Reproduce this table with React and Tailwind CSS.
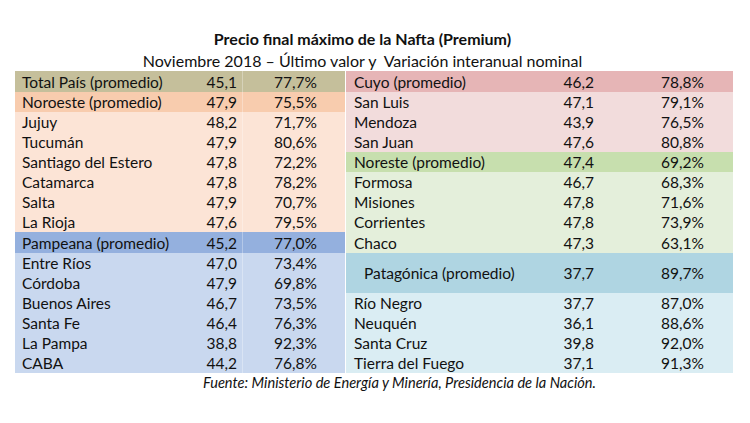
const font = { fontFamily: "Lato, 'Open Sans', sans-serif" }

const left = [
  { head: ["Total País (promedio)", "45,1", "77,7%"], headBg: "bg-[#c5bf9b]", headH: "h-[21px]", rowBg: "", rows: [] },
  {
    head: ["Noroeste (promedio)", "47,9", "75,5%"],
    headBg: "bg-[#f8ccae]",
    rowBg: "bg-[#fce4d6]",
    rows: [
      ["Jujuy", "48,2", "71,7%"],
      ["Tucumán", "47,9", "80,6%"],
      ["Santiago del Estero", "47,8", "72,2%"],
      ["Catamarca", "47,8", "78,2%"],
      ["Salta", "47,9", "70,7%"],
      ["La Rioja", "47,6", "79,5%"],
    ],
  },
  {
    head: ["Pampeana (promedio)", "45,2", "77,0%"],
    headBg: "bg-[#94b0de]",
    headH: "h-[21px]",
    rowBg: "bg-[#c9d8ef]",
    rows: [
      ["Entre Ríos", "47,0", "73,4%"],
      ["Córdoba", "47,9", "69,8%"],
      ["Buenos Aires", "46,7", "73,5%"],
      ["Santa Fe", "46,4", "76,3%"],
      ["La Pampa", "38,8", "92,3%"],
      ["CABA", "44,2", "76,8%"],
    ],
  },
]

const right = [
  {
    head: ["Cuyo (promedio)", "46,2", "78,8%"],
    headBg: "bg-[#e6b5b6]",
    headH: "h-[21px]",
    rowBg: "bg-[#f2dcdc]",
    rows: [
      ["San Luis", "47,1", "79,1%"],
      ["Mendoza", "43,9", "76,5%"],
      ["San Juan", "47,6", "80,8%"],
    ],
  },
  {
    head: ["Noreste (promedio)", "47,4", "69,2%"],
    headBg: "bg-[#c7dfae]",
    rowBg: "bg-[#e4efdb]",
    rows: [
      ["Formosa", "46,7", "68,3%"],
      ["Misiones", "47,8", "71,6%"],
      ["Corrientes", "47,8", "73,9%"],
      ["Chaco", "47,3", "63,1%", "h-[21px]"],
    ],
  },
  {
    head: ["Patagónica (promedio)", "37,7", "89,7%"],
    headBg: "bg-[#afd5e2]",
    headH: "h-10",
    indent: true,
    rowBg: "bg-[#daedf3]",
    rows: [
      ["Río Negro", "37,7", "87,0%"],
      ["Neuquén", "36,1", "88,6%"],
      ["Santa Cruz", "39,8", "92,0%"],
      ["Tierra del Fuego", "37,1", "91,3%"],
    ],
  },
]

const LeftRow = ({ cells, bg, h = "h-5" }) => (
  <div className={`grid grid-cols-[227px_103px] items-center ${h} ${bg}`}>
    <div className="flex justify-between pl-[7px] pr-[5px]">
      <span>{cells[0]}</span>
      <span>{cells[1]}</span>
    </div>
    <div className="h-full flex items-center justify-end pr-[28px] border-l border-white/30">{cells[2]}</div>
  </div>
)

const RightRow = ({ cells, bg, h = "h-5", indent }) => (
  <div className={`grid grid-cols-[252px_136px] items-center ${h} ${bg}`}>
    <div className={`flex justify-between pr-[4px] ${indent ? "pl-[18px]" : "pl-[8px]"}`}>
      <span>{cells[0]}</span>
      <span>{cells[1]}</span>
    </div>
    <div className="text-right pr-[30px]">{cells[2]}</div>
  </div>
)

export default function App() {
  return (
    <div className="w-[750px] h-[423px] bg-white text-[#111]" style={font}>
      <div className="w-[725px] pt-[28px] text-center">
        <div className="text-[16px] leading-[22px] font-bold">Precio final máximo de la Nafta (Premium)</div>
        <div className="text-[16px] leading-[21px]">Noviembre 2018 – Último valor y&nbsp; Variación interanual nominal</div>
      </div>
      <div className="ml-[15px] flex text-[15.5px] leading-5">
        <div className="w-[330px]">
          {left.map((g) => (
            <div key={g.head[0]}>
              <LeftRow cells={g.head} bg={g.headBg} h={g.headH} />
              {g.rows.map((r) => (
                <LeftRow key={r[0]} cells={r} bg={g.rowBg} />
              ))}
            </div>
          ))}
        </div>
        <div className="w-[388px] border-l border-white/50">
          {right.map((g) => (
            <div key={g.head[0]}>
              <RightRow cells={g.head} bg={g.headBg} h={g.headH} indent={g.indent} />
              {g.rows.map((r) => (
                <RightRow key={r[0]} cells={r} bg={g.rowBg} h={r[3]} />
              ))}
            </div>
          ))}
        </div>
      </div>
      <div className="pl-[203px] text-[14.6px] leading-5 italic">
        Fuente: Ministerio de Energía y Minería, Presidencia de la Nación.
      </div>
    </div>
  )
}
